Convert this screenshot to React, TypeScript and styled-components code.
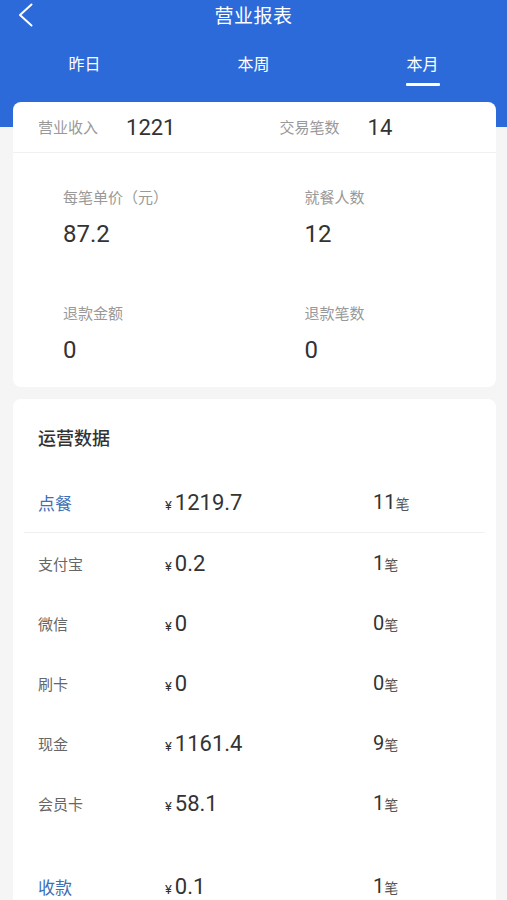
import * as React from 'react';
import styled, { createGlobalStyle } from 'styled-components';

const GlobalStyle = createGlobalStyle`
    html, body {
        margin: 0;
        padding: 0;
        background: #f5f5f5;
    }
    body {
        font-family: "Noto Sans CJK SC", "Noto Sans", Roboto, sans-serif;
        color: #333;
    }
`;

const Page = styled.div`
    width: 507px;
    min-height: 900px;
    background: #f5f5f5;
    overflow: hidden;
`;

const Header = styled.div`
    background: #2d6ad9;
    color: #fff;
    padding-bottom: 41px;
`;

const TitleBar = styled.div`
    display: grid;
    grid-template-columns: 48px 1fr 48px;
    align-items: center;
    height: 30px;
`;

const BackButton = styled.div`
    display: flex;
    align-items: center;
    padding-left: 18px;
    height: 30px;
`;

const Title = styled.div`
    text-align: center;
    font-size: 19px;
    line-height: 30px;
    letter-spacing: 0.5px;
`;

const Tabs = styled.div`
    display: grid;
    grid-template-columns: repeat(3, 1fr);
    margin-top: 22px;
`;

const Tab = styled.div<{ $active?: boolean }>`
    display: flex;
    flex-direction: column;
    align-items: center;
    font-size: 16px;
    line-height: 22px;
    &:after {
        content: '';
        margin-top: 9px;
        width: 34px;
        height: 3px;
        border-radius: 1px;
        background: ${p => (p.$active ? '#fff' : 'transparent')};
    }
`;

const Card = styled.div`
    margin: 0 11px 0 13px;
    background: #fff;
    border-radius: 8px;
`;

const SummaryCard = styled(Card)`
    margin-top: -25px;
`;

const TopRow = styled.div`
    display: grid;
    grid-template-columns: 1fr 1fr;
    height: 50px;
    border-bottom: 1px solid #f0f0f0;
`;

const TopItem = styled.div`
    display: flex;
    align-items: center;
    padding-left: 25px;
    gap: 28px;
`;

const Label = styled.span`
    font-size: 15px;
    line-height: 20px;
    color: #999;
`;

const TopValue = styled.span`
    font-family: Roboto, "Noto Sans", sans-serif;
    font-size: 22px;
    color: #333;
`;

const StatGrid = styled.div`
    display: grid;
    grid-template-columns: 1fr 1fr;
    row-gap: 54px;
    padding: 34px 0 22px;
`;

const Stat = styled.div`
    display: flex;
    flex-direction: column;
    gap: 12px;
    padding-left: 50px;
`;

const StatValue = styled.span`
    font-family: Roboto, "Noto Sans", sans-serif;
    font-size: 24px;
    line-height: 30px;
    color: #333;
`;

const OpsCard = styled(Card)`
    margin-top: 12px;
    padding: 26px 11px 0;
`;

const OpsTitle = styled.div`
    padding-left: 14px;
    font-size: 18px;
    font-weight: 500;
    line-height: 24px;
    color: #333;
    margin-bottom: 23px;
`;

const Group = styled.div`
    margin-bottom: 23px;
`;

const Row = styled.div<{ $main?: boolean }>`
    display: grid;
    grid-template-columns: 127px 208px 1fr;
    align-items: center;
    height: 60px;
    padding-left: 14px;
    border-bottom: ${p => (p.$main ? '1px solid #f0f0f0' : 'none')};
`;

const RowLabel = styled.span<{ $main?: boolean }>`
    font-size: ${p => (p.$main ? '17px' : '15px')};
    color: ${p => (p.$main ? '#3d6fb6' : '#666')};
`;

const Amount = styled.span`
    display: flex;
    align-items: baseline;
    font-family: Roboto, "Noto Sans", sans-serif;
    color: #333;
`;

const Yen = styled.span`
    font-size: 13px;
    margin-right: 3px;
`;

const AmountNum = styled.span`
    font-size: 22px;
`;

const Count = styled.span`
    display: flex;
    align-items: baseline;
    font-family: Roboto, "Noto Sans", sans-serif;
    font-size: 20px;
    color: #333;
`;

const Unit = styled.span`
    font-family: "Noto Sans CJK SC", sans-serif;
    font-size: 14px;
    color: #555;
`;

const ChevronLeft = () => (
    <svg width="15" height="24" viewBox="0 0 15 24" fill="none">
        <polyline points="13.5,1.5 2,12 13.5,22.5" stroke="#fff" strokeWidth="2" strokeLinecap="round" strokeLinejoin="round" />
    </svg>
);

type Line = { label: string, amount: string, count: string };

const groups: { main: Line, subs: Line[] }[] = [
    {
        main: { label: '点餐', amount: '1219.7', count: '11' },
        subs: [
            { label: '支付宝', amount: '0.2', count: '1' },
            { label: '微信', amount: '0', count: '0' },
            { label: '刷卡', amount: '0', count: '0' },
            { label: '现金', amount: '1161.4', count: '9' },
            { label: '会员卡', amount: '58.1', count: '1' },
        ],
    },
    {
        main: { label: '收款', amount: '0.1', count: '1' },
        subs: [],
    },
];

const stats = [
    { label: '每笔单价（元）', value: '87.2' },
    { label: '就餐人数', value: '12' },
    { label: '退款金额', value: '0' },
    { label: '退款笔数', value: '0' },
];

const DataRow = ({ line, main }: { line: Line, main?: boolean }) => (
    <Row $main={main}>
        <RowLabel $main={main}>{line.label}</RowLabel>
        <Amount>
            <Yen>¥</Yen>
            <AmountNum>{line.amount}</AmountNum>
        </Amount>
        <Count>
            {line.count}
            <Unit>笔</Unit>
        </Count>
    </Row>
);

export default function App() {
    return (
        <Page>
            <GlobalStyle />
            <Header>
                <TitleBar>
                    <BackButton>
                        <ChevronLeft />
                    </BackButton>
                    <Title>营业报表</Title>
                    <div />
                </TitleBar>
                <Tabs>
                    <Tab>昨日</Tab>
                    <Tab>本周</Tab>
                    <Tab $active>本月</Tab>
                </Tabs>
            </Header>

            <SummaryCard>
                <TopRow>
                    <TopItem>
                        <Label>营业收入</Label>
                        <TopValue>1221</TopValue>
                    </TopItem>
                    <TopItem>
                        <Label>交易笔数</Label>
                        <TopValue>14</TopValue>
                    </TopItem>
                </TopRow>
                <StatGrid>
                    {stats.map(s => (
                        <Stat key={s.label}>
                            <Label>{s.label}</Label>
                            <StatValue>{s.value}</StatValue>
                        </Stat>
                    ))}
                </StatGrid>
            </SummaryCard>

            <OpsCard>
                <OpsTitle>运营数据</OpsTitle>
                {groups.map(g => (
                    <Group key={g.main.label}>
                        <DataRow line={g.main} main />
                        {g.subs.map(s => (
                            <DataRow key={s.label} line={s} />
                        ))}
                    </Group>
                ))}
            </OpsCard>
        </Page>
    );
}
